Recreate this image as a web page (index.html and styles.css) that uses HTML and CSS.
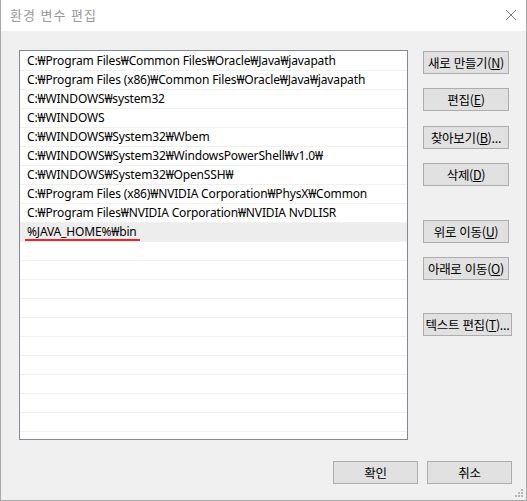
FILE: index.html
```html
<!DOCTYPE html>
<html lang="ko">
<head>
<meta charset="utf-8">
<title>환경 변수 편집</title>
<link rel="stylesheet" href="styles.css">
</head>
<body>
<div class="window">
  <div class="titlebar">
    <span class="title">환경 변수 편집</span>
    <svg class="close" width="12" height="12" viewBox="0 0 12 12"><path d="M1 1L11 11M11 1L1 11" stroke="#7a7a7a" stroke-width="1" fill="none"/></svg>
  </div>
  <div class="content">
    <div class="main">
      <div class="list">
        <div class="row">C:₩Program Files₩Common Files₩Oracle₩Java₩javapath</div>
        <div class="row">C:₩Program Files (x86)₩Common Files₩Oracle₩Java₩javapath</div>
        <div class="row">C:₩WINDOWS₩system32</div>
        <div class="row">C:₩WINDOWS</div>
        <div class="row">C:₩WINDOWS₩System32₩Wbem</div>
        <div class="row">C:₩WINDOWS₩System32₩WindowsPowerShell₩v1.0₩</div>
        <div class="row">C:₩WINDOWS₩System32₩OpenSSH₩</div>
        <div class="row">C:₩Program Files (x86)₩NVIDIA Corporation₩PhysX₩Common</div>
        <div class="row">C:₩Program Files₩NVIDIA Corporation₩NVIDIA NvDLISR</div>
        <div class="row selected"><span class="marked">%JAVA_HOME%₩bin</span></div>
        <div class="row"></div>
        <div class="row"></div>
        <div class="row"></div>
        <div class="row"></div>
        <div class="row"></div>
        <div class="row"></div>
        <div class="row"></div>
        <div class="row"></div>
        <div class="row"></div>
        <div class="row"></div>
      </div>
      <div class="side">
        <button class="btn">새로 만들기(<u>N</u>)</button>
        <button class="btn gap-s">편집(<u>E</u>)</button>
        <button class="btn gap-m">찾아보기(<u>B</u>)...</button>
        <button class="btn gap-s">삭제(<u>D</u>)</button>
        <button class="btn gap-l">위로 이동(<u>U</u>)</button>
        <button class="btn gap-s">아래로 이동(<u>O</u>)</button>
        <button class="btn wide gap-l2">텍스트 편집(<u>T</u>)...</button>
      </div>
    </div>
    <div class="footer">
      <button class="btn">확인</button>
      <button class="btn">취소</button>
    </div>
    <svg class="grip" width="8" height="8" viewBox="0 0 8 8">
      <rect x="6" y="0" width="2" height="2" fill="#b8b8b8"/>
      <rect x="3" y="3" width="2" height="2" fill="#b8b8b8"/>
      <rect x="6" y="3" width="2" height="2" fill="#b8b8b8"/>
      <rect x="0" y="6" width="2" height="2" fill="#b8b8b8"/>
      <rect x="3" y="6" width="2" height="2" fill="#b8b8b8"/>
      <rect x="6" y="6" width="2" height="2" fill="#b8b8b8"/>
    </svg>
  </div>
</div>
</body>
</html>
```
FILE: styles.css
```css
html, body {
  margin: 0;
  padding: 0;
  background: #ffffff;
}
body {
  font-family: "Noto Sans CJK KR", "Noto Sans", sans-serif;
  font-size: 12px;
  color: #000;
}
.window {
  width: 527px;
  height: 501px;
  box-sizing: border-box;
  border: 1px solid #a8a8a8;
  border-top: none;
  display: flex;
  flex-direction: column;
}
.titlebar {
  height: 31px;
  flex: none;
  background: #ffffff;
  display: flex;
  align-items: center;
  padding-left: 9px;
  position: relative;
}
.title {
  font-size: 13px;
  color: #9a9a9a;
  letter-spacing: 1px;
  line-height: 16px;
  margin-top: -1px;
}
.close {
  position: absolute;
  left: 504px;
  top: 9px;
}
.content {
  flex: 1;
  background: #f0f0f0;
  padding: 19px 14px 0 18px;
  position: relative;
}
.main {
  display: flex;
  align-items: flex-start;
  gap: 15px;
}
.list {
  width: 392px;
  height: 390px;
  box-sizing: border-box;
  border: 1px solid #828790;
  background: #ffffff;
  padding-top: 1px;
  overflow: hidden;
  font-family: "Noto Sans", "Noto Sans CJK KR", sans-serif;
}
.row {
  height: 19px;
  box-sizing: border-box;
  border-bottom: 1px solid #f0f0f0;
  line-height: 18px;
  padding-left: 7px;
  white-space: nowrap;
  display: flex;
  align-items: center;
  letter-spacing: -0.15px;
}
.row.selected {
  background: #ededed;
}
.marked {
  display: inline-block;
  position: relative;
  line-height: 18px;
}
.marked::after {
  content: "";
  position: absolute;
  left: -2px;
  right: -3px;
  top: 16px;
  height: 2px;
  background: #e8262b;
}
.side {
  display: flex;
  flex-direction: column;
  align-items: flex-start;
  padding-top: 1px;
}
.btn {
  width: 86px;
  height: 23px;
  box-sizing: border-box;
  border: 1px solid #adadad;
  background: #e1e1e1;
  font-family: "Noto Sans CJK KR", "Noto Sans", sans-serif;
  font-size: 12.5px;
  color: #000;
  padding: 0;
  margin: 0;
  line-height: 20px;
  white-space: nowrap;
  letter-spacing: -0.3px;
}
.btn u {
  text-decoration: underline;
  text-underline-offset: 1px;
}
.btn.wide {
  width: 89px;
}
.gap-s { margin-top: 14px; }
.gap-m { margin-top: 15px; }
.gap-l { margin-top: 34px; }
.gap-l2 { margin-top: 33px; }
.footer {
  display: flex;
  justify-content: flex-end;
  gap: 9px;
  margin-top: 21px;
}
.footer .btn {
  width: 85px;
}
.grip {
  position: absolute;
  right: 3px;
  bottom: 3px;
}
```
